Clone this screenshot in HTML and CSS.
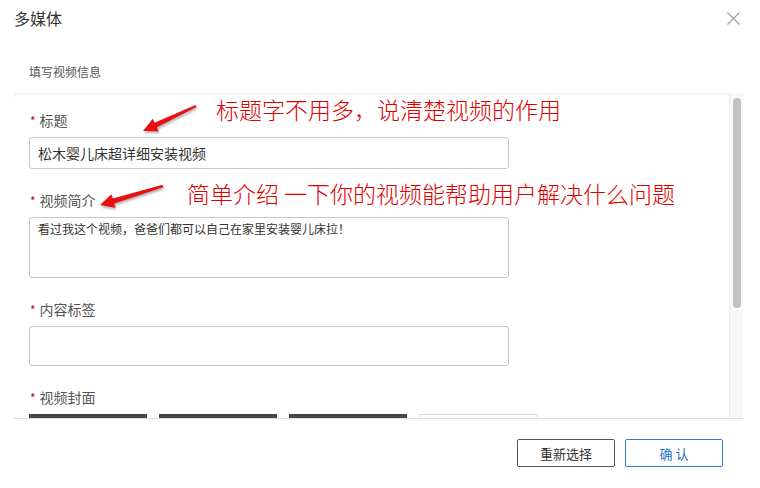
FILE: index.html
```html
<!DOCTYPE html>
<html lang="zh-CN">
<head>
<meta charset="utf-8">
<title>多媒体</title>
<link rel="stylesheet" href="styles.css">
</head>
<body>
<div class="dialog">
  <div class="header">
    <div class="title">多媒体</div>
    <svg class="close" width="13" height="13" viewBox="0 0 13 13"><path d="M0.5 0.5 L12.5 12.5 M12.5 0.5 L0.5 12.5" stroke="#a0a0a0" stroke-width="1.2" fill="none"/></svg>
  </div>
  <div class="subtitle">填写视频信息</div>
  <div class="panel">
    <div class="content">
      <div class="field first">
        <div class="label"><span class="req">*</span>标题</div>
        <div class="input">松木婴儿床超详细安装视频</div>
      </div>
      <div class="field">
        <div class="label"><span class="req">*</span>视频简介</div>
        <div class="textarea">看过我这个视频，爸爸们都可以自己在家里安装婴儿床拉！</div>
      </div>
      <div class="field">
        <div class="label"><span class="req">*</span>内容标签</div>
        <div class="input tall"></div>
      </div>
      <div class="field last">
        <div class="label"><span class="req">*</span>视频封面</div>
        <div class="thumbs">
          <div class="thumb"></div>
          <div class="thumb"></div>
          <div class="thumb"></div>
          <div class="thumb empty"></div>
        </div>
      </div>
    </div>
    <div class="scrollbar"><div class="thumbbar"></div></div>
  </div>
  <div class="footer">
    <button class="btn">重新选择</button>
    <button class="btn primary">确 认</button>
  </div>

  <div class="note note1">标题字不用多，说清楚视频的作用</div>
  <div class="note note2">简单介绍 一下你的视频能帮助用户解决什么问题</div>
  <svg class="arrows" width="760" height="488" viewBox="0 0 760 488">
    <polygon points="195.5,104.9 154.6,122.7 152.7,118.7 143,131 158.7,131.3 156.8,127.3 196.5,107.1" fill="#e81010"/>
    <polygon points="162.6,184.8 112.7,198.6 111.4,194.3 100,205 115.4,207.7 114.1,203.4 163.4,187.2" fill="#e81010"/>
  </svg>
</div>
</body>
</html>
```

FILE: styles.css
```css
html, body {
  margin: 0;
  padding: 0;
  background: #fff;
}
body {
  font-family: "Noto Sans CJK SC", "Noto Sans", sans-serif;
  color: #333;
}
.dialog {
  position: relative;
  width: 760px;
  height: 488px;
  overflow: hidden;
}
.header {
  height: 36px;
  display: flex;
  align-items: center;
  justify-content: space-between;
  padding: 0 20px 0 14px;
}
.title {
  font-size: 16px;
  color: #333;
  line-height: 20px;
}
.close {
  display: block;
}
.subtitle {
  margin-top: 26px;
  padding-left: 29px;
  font-size: 12px;
  line-height: 20px;
  color: #555;
}
.panel {
  margin: 11px 17px 0 14px;
  height: 325px;
  border-bottom: 1px solid #dcdcdc;
  display: flex;
  box-shadow: inset 0 3px 3px -1px rgba(0,0,0,0.06);
}
.content {
  flex: 1;
  overflow: hidden;
  padding: 17px 0 0 15px;
}
.field {
  margin-top: 21px;
}
.field.first {
  margin-top: 0;
}
.label {
  font-size: 14px;
  line-height: 20px;
  color: #555;
  padding-left: 1px;
  margin-bottom: 6px;
}
.req {
  color: #d40000;
  font-size: 12px;
  margin-right: 4px;
}
.input {
  box-sizing: border-box;
  width: 480px;
  height: 32px;
  border: 1px solid #c8c8c8;
  border-radius: 3px;
  padding: 0 8px;
  font-size: 14px;
  line-height: 30px;
  color: #333;
}
.input.tall {
  height: 40px;
}
.textarea {
  box-sizing: border-box;
  width: 480px;
  height: 61px;
  margin-top: 1px;
  border: 1px solid #c8c8c8;
  border-radius: 3px;
  padding: 2px 8px;
  font-size: 12px;
  line-height: 18px;
  color: #333;
}
.thumbs {
  display: flex;
  gap: 12px;
  margin-top: 3px;
}
.thumb {
  width: 118px;
  height: 80px;
  background: #4a4a4a;
  border-top: 2px solid #444;
}
.thumb.empty {
  box-sizing: border-box;
  width: 119px;
  background: #fff;
  border: 1px solid #ddd;
}
.scrollbar {
  width: 13px;
  background: #f8f8f8;
  border-left: 1px solid #ececec;
}
.thumbbar {
  margin: 5px 0 0 3px;
  width: 8px;
  height: 210px;
  background: #c1c1c1;
  border-radius: 4px;
}
.footer {
  display: flex;
  justify-content: flex-end;
  gap: 10px;
  margin-top: 20px;
  padding-right: 37px;
}
.btn {
  box-sizing: border-box;
  width: 98px;
  height: 28px;
  background: #fff;
  border: 1px solid #555;
  border-radius: 2px;
  font-family: "Noto Sans CJK SC", "Noto Sans", sans-serif;
  font-size: 13px;
  color: #333;
  padding: 0;
}
.btn.primary {
  border-color: #2d7fcf;
  color: #1f6fc4;
}
.note {
  position: absolute;
  color: #e00000;
  line-height: 1;
  white-space: nowrap;
  font-family: "Noto Sans CJK SC", sans-serif;
  font-weight: 300;
  font-size: 23px;
}
.note1 {
  left: 216px;
  top: 98px;
}
.note2 {
  left: 187px;
  top: 182px;
}
.arrows {
  position: absolute;
  left: 0;
  top: 0;
  pointer-events: none;
  filter: drop-shadow(1px 2px 1px rgba(0,0,0,0.3));
}
```
